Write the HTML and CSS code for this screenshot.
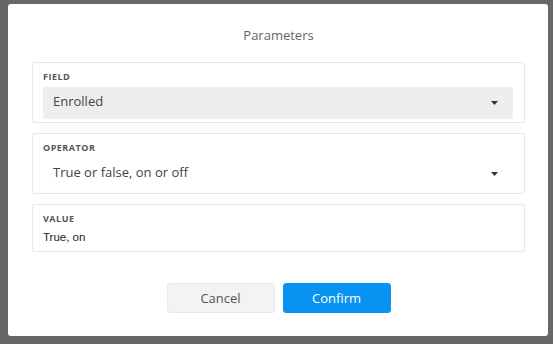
FILE: index.html
```html
<!DOCTYPE html>
<html lang="en">
<head>
  <meta charset="UTF-8" />
  <title>Parameters</title>
  <link rel="stylesheet" href="styles.css">
</head>
<body>

  <div class="modal">
    <h2 class="modal-title">Parameters</h2>

    <div class="card">
      <p class="card-label">Field</p>
      <div class="select select-filled">
        <span>Enrolled</span>
        <svg class="caret" width="7" height="4" viewBox="0 0 7 4"><path d="M0 0h7L3.5 4z"/></svg>
      </div>
    </div>

    <div class="card">
      <p class="card-label">Operator</p>
      <div class="select">
        <span>True or false, on or off</span>
        <svg class="caret" width="7" height="4" viewBox="0 0 7 4"><path d="M0 0h7L3.5 4z"/></svg>
      </div>
    </div>

    <div class="card card-value">
      <p class="card-label">Value</p>
      <p class="value-text">True, on</p>
    </div>

    <div class="actions">
      <button class="btn btn-cancel">Cancel</button>
      <button class="btn btn-confirm">Confirm</button>
    </div>
  </div>

</body>
</html>
```

FILE: styles.css
```css
* { margin:0; padding:0; box-sizing:border-box; font-family:'Open Sans',sans-serif; }
body { background:#676767; }

.modal {
  width:540px; height:332px; margin:4px 0 0 8px;
  background:#fff; border-radius:3px;
  padding:0 23px 0 24px;
  display:flex; flex-direction:column; gap:10px;
}
.modal-title {
  font-size:13px; font-weight:400; color:#666; text-align:center;
  line-height:16px; padding:23px 0 9px;
}

.card { border:1px solid #e8e8e8; border-radius:2px; padding:9px 11px 3px 10px; }
.card-label {
  font-size:9px; font-weight:700; color:#555; line-height:10px;
  text-transform:uppercase; letter-spacing:0.5px;
}

.select {
  height:32px; margin-top:5px; border-radius:2px;
  display:flex; align-items:center; justify-content:space-between;
  padding:0 15px 0 10px;
  font-size:13px; color:#444;
}
.select span { margin-top:-4px; }
.select-filled { background:#eeeeee; }
.caret { fill:#333; margin-top:-1px; }

.card-value { padding-bottom:7px; }
.value-text {
  font-family:'Liberation Sans',Arial,sans-serif; font-size:11.5px; color:#222;
  line-height:14px; margin-top:6px;
}

.actions { display:flex; justify-content:center; gap:8px; margin-top:21px; }
.btn {
  width:108px; height:30px; border-radius:3px; font-size:13px; cursor:pointer;
}
.btn-cancel { background:#f3f3f3; border:1px solid #e9e9e9; color:#555; }
.btn-confirm { background:#0793ef; border:1px solid #0793ef; color:#fff; }
```
